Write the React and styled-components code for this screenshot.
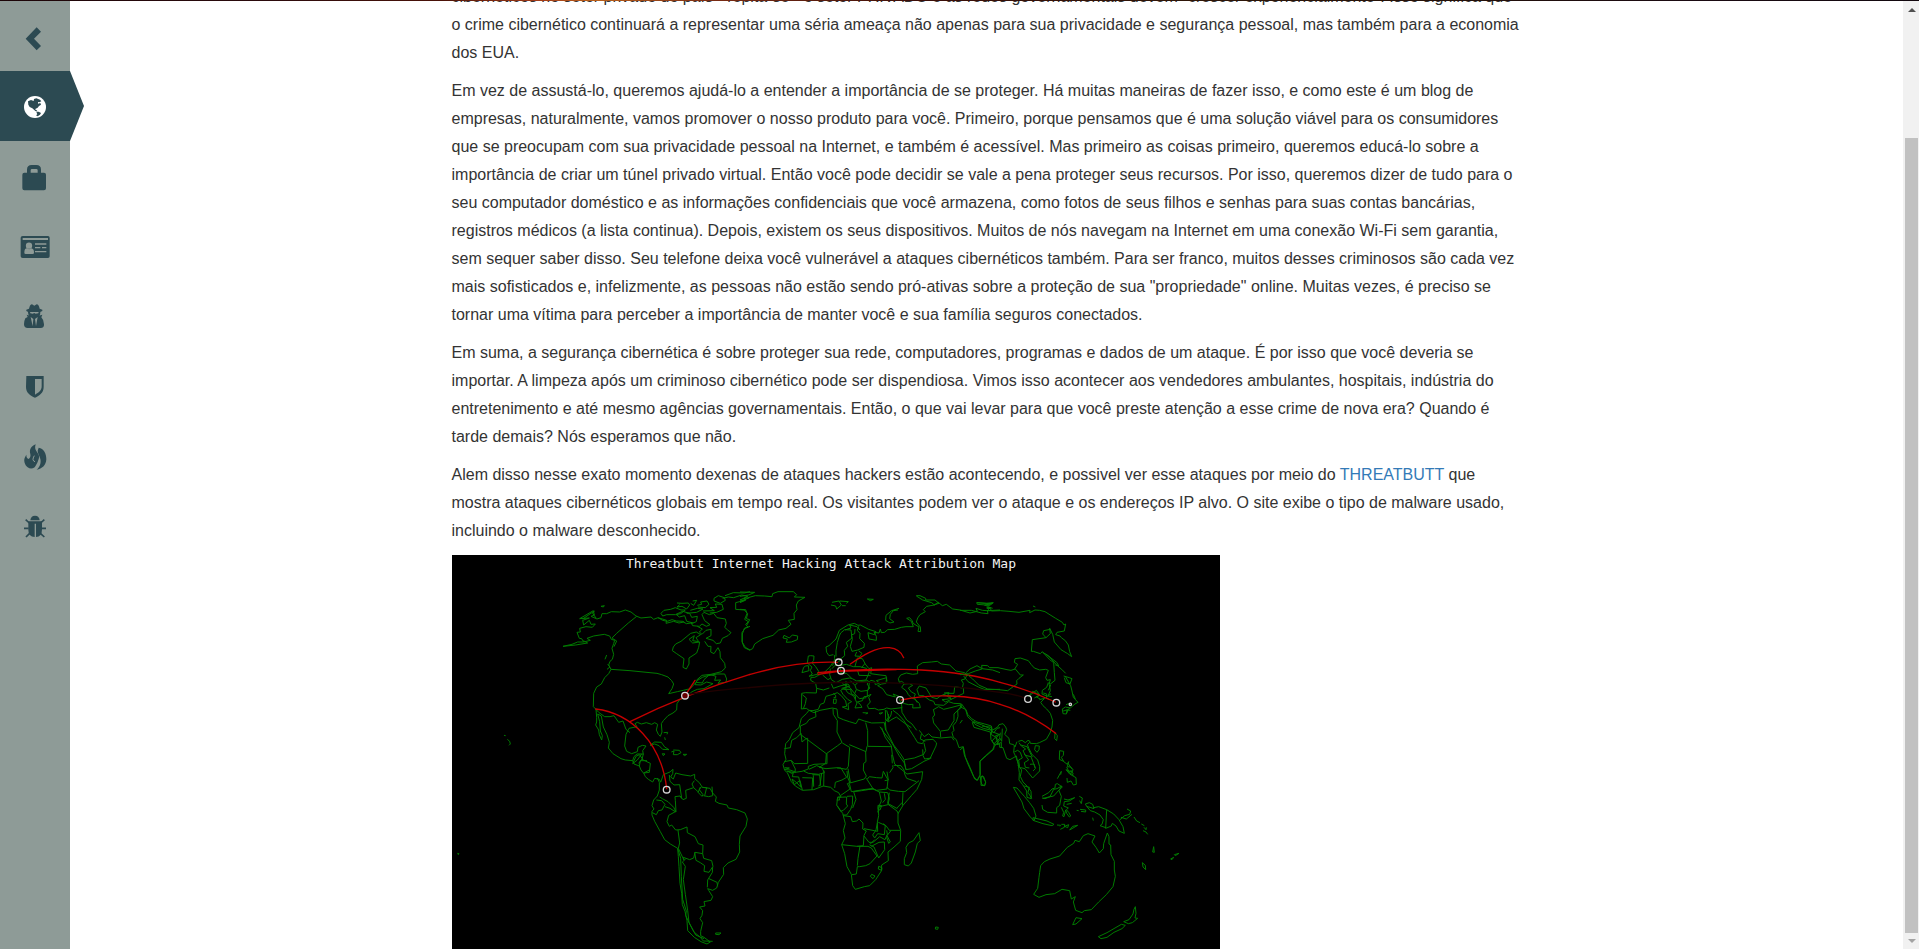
import React from "react";
import styled, { createGlobalStyle, css } from "styled-components";

const GlobalStyle = createGlobalStyle`
  html, body { margin: 0; padding: 0; background: #fff; overflow: hidden; }
  * { box-sizing: border-box; }
`;

const Screen = styled.div`
  position: relative;
  display: flex;
  width: 100%;
  height: 949px;
  padding-top: 1px;
  overflow: hidden;
  background: #fff;
  font-family: "Liberation Sans", Arial, sans-serif;
  font-size: 16px;
  line-height: 28px;
  color: #333;
`;

const TopEdge = styled.div`
  position: absolute;
  inset: 0 0 auto 0;
  height: 1px;
  background: linear-gradient(90deg, #1c0508 0%, #2b0a0c 14%, #4a1208 23%, #a03a18 28%, #b8601c 31%, #7a2c14 37%, #3a0d08 48%, #2e1608 62%, #241008 75%, #1a0a12 88%, #12080e 100%);
`;

const Sidebar = styled.nav`
  flex: none;
  width: 70px;
  background: #8e9b97;
`;

const NavItem = styled.a`
  position: relative;
  display: block;
  width: 70px;
  height: 70px;
  color: #2c4a52;
  ${(p) =>
    p.$active &&
    css`
      color: #fff;
      background: #2c4a52;
      &::after {
        content: "";
        position: absolute;
        left: 100%;
        top: 0;
        border: solid transparent;
        border-width: 35px 0 35px 14px;
        border-left-color: #2c4a52;
      }
    `}
`;

const NavIcon = styled.svg`
  display: block;
  width: 70px;
  height: 70px;
  fill: currentColor;
`;

const Main = styled.main`
  flex: 1;
  min-width: 0;
  overflow: hidden;
  padding-left: 381.5px;
`;

const Article = styled.article`
  width: 1070px;
  margin-top: -18px;
`;

const Paragraph = styled.p`
  margin: 0 0 10px;
`;

const Link = styled.a`
  color: #337ab7;
  text-decoration: none;
`;

const MapSvg = styled.svg`
  display: block;
  width: 768px;
  height: 420px;
  background: #000;
`;

const MapTitle = styled.text`
  font-family: "DejaVu Sans Mono", monospace;
  font-size: 13px;
  fill: #f2f2f2;
`;

const Coast = styled.g`
  fill: none;
  stroke: #007a00;
  stroke-width: 3;
  stroke-linejoin: round;
`;

const Attack = styled.g`
  fill: none;
  stroke: #c40000;
  stroke-width: 4;
  stroke-linecap: round;
`;

const Trail = styled.path`
  stroke: #220000;
`;

const Target = styled.g`
  fill: none;
  stroke: #d6d6d6;
  stroke-width: 4;
`;

const ScrollTrack = styled.div`
  flex: none;
  display: flex;
  flex-direction: column;
  align-items: center;
  width: 16px;
  height: 948px;
  padding: 7px 1px 6px 2px;
  background: #f1f1f1;
`;

const ScrollArrow = styled.i`
  width: 0;
  height: 0;
  border: solid transparent;
  border-width: ${(p) => (p.$down ? "4px 4px 0" : "0 4px 4px")};
  ${(p) => (p.$down ? "border-top-color: #a3a3a3;" : "border-bottom-color: #505050;")}
`;

const ScrollThumb = styled.div`
  width: 13px;
  height: 795px;
  margin: 126px 0 6px;
  background: #c1c1c1;
`;

const icons = {
  back: <path d="M77 113 110 79 123 92 102 113 123 135 110 148Z" />,
  globe: (
    <>
      <circle cx="105" cy="108" r="33" />
      <path
        fill="#2c4a52"
        d="M84 91 93 87 101 90 102 84 109 82 120 86 124 91 118 94 114 93 114 98 121 96 123 101 117 105 113 110 107 113 105 115 110 118 113 122 106 120 97 112 89 108 85 101ZM109 124 116 122 123 126 120 131 113 136 108 133 112 130Z"
      />
    </>
  ),
  lock: (
    <path
      fillRule="evenodd"
      d="M67 101Q67 95 73 95H81V86Q81 72 95 72H109Q123 72 123 86V95H132Q138 95 138 101V142Q138 148 132 148H73Q67 148 67 142ZM92 95H113V88Q113 84 109 84H96Q92 84 92 88Z"
    />
  ),
  card: (
    <>
      <path fillRule="evenodd" d="M68 75H144Q149 75 149 80V136Q149 141 144 141H68Q62 141 62 136V80Q62 75 68 75ZM68 81V87H144V81Z" />
      <g fill="#8e9b97">
        <circle cx="87" cy="104" r="9.5" />
        <path d="M73 125Q73 112 81 112Q87 117 94 112Q102 113 102 125Q102 129 98 129H77Q73 129 73 125Z" />
        <path d="M105 97H139V101H105ZM105 108H121V112H105ZM126 108H139V112H126ZM105 120H139V124H105Z" />
      </g>
    </>
  ),
  spy: (
    <>
      <path d="M87 83Q90 70 96 70L103 74 110 70Q116 70 119 83L127 86V90L119 94H86L79 90V86Z" />
      <path d="M84 93H121Q121 107 112 114L103 118 94 114Q85 107 84 93Z" />
      <path d="M80 101 83 108 76 112Q72 120 72 130 72 141 83 141H122Q133 141 132 130 132 117 124 109L127 101 114 105 107 113 103 116 98 113 92 105Z" />
      <g fill="#8e9b97">
        <path d="M90 93H116L115 97 107 98 103 96 98 98 91 97Z" />
        <path d="M92 108 100 114 98 136ZM113 108 105 114 108 136Z" />
      </g>
    </>
  ),
  shield: (
    <path fillRule="evenodd" d="M79 75H131V108C131 126 118 134 105 140C91 134 78 126 78 108ZM105 84V131C116 125 125 119 125 106V84Z" />
  ),
  fire: (
    <>
      <path d="M107 70Q103 82 109 90C114 98 121 105 115 117C112 126 108 133 104 139Q93 146 83 139C74 132 70 118 75 109Q77 104 79 101Q79 112 86 114Q93 109 91 99C87 87 93 75 107 70Z" />
      <path d="M116 80C131 82 140 99 139 115C138 133 126 144 110 146C119 139 124 126 121 114C119 103 113 98 113 89Z" />
      <path d="M103 104Q94 119 105 122" fill="none" stroke="#8e9b97" strokeWidth="3" />
    </>
  ),
  bug: (
    <>
      <path d="M91 88Q92 74 105 74 118 74 119 88Z" />
      <path d="M85 91H126V115Q126 138 108 138V98H104V138Q85 137 85 116Z" />
      <path d="M88 96 77 86M122 96 133 86M86 112H72M124 112H138M89 127 78 138M121 127 133 138" fill="none" stroke="currentColor" strokeWidth="5" />
    </>
  ),
};

const americas = [
  "M339 289 366 283 383 276 401 276 395 266 388 265 381 247 391 246 389 235 408 230 427 232 436 222 423 223 418 211 401 225 398 211 418 204 389 206 430 182 433 195 423 199 441 207 453 203 456 191 470 191 484 185 509 186 526 180 543 186 558 198 573 204 603 201 611 208 624 203 650 211 648 220 671 214 687 219 702 216 705 220",
  "M401 276 421 271 411 265 431 258 450 255 463 253 479 258 484 268 494 271 491 281 486 295 491 313 487 328 480 334 476 345 483 358 476 371 464 383 454 402 440 411 431 430 430 470 438 478 440 502 440 516 437 525 446 540 448 554 455 570 457 557 451 543 449 515 443 492 454 498 460 531 471 554 478 577 475 594 489 611 513 626 526 630 548 632 552 642 568 648 573 660 582 671 586 680 595 688 608 696 614 685 628 688 632 696",
  "M339 289 377 285 413 279 400 272M486 264 500 250 535 219 560 199M398 207 433 183 428 190 438 204M453 169 463 167 460 171Z",
  "M483 358 540 362 600 368 621 370 635 374 654 381 665 392 671 402 666 416 656 431 682 425 700 421 721 416 728 408 738 397 757 399 762 389 775 377 801 372 824 372 830 387 828 397 804 400 812 390 794 391 798 379 782 374 757 382 741 392 735 404 753 405 770 396 789 401 762 416 742 418 726 425 717 433 700 445 688 450 681 461 680 480 669 489 654 497 640 512 634 521 636 546 631 559 625 553 619 540 623 523 614 518 605 523 589 518 574 522 562 517 555 521 561 530 537 535 528 553 524 588 530 604 545 611 562 605 564 592 577 586 588 588 578 602 580 613",
  "M438 478 446 487 464 500 480 500 492 497 506 517 519 513 528 538 540 548M548 632 552 620 561 612 580 612 576 628 586 633 601 640 598 667 582 669M568 648 571 632 591 632M575 612 562 630 548 641 558 619 568 614 577 626 566 640M580 670 598 660",
  "M600 586 614 576 634 577 644 591 657 599 638 598 627 587 614 582 600 586M637 611 645 612 640 617ZM664 606 672 603 670 614 682 614 693 608 688 601 670 600M699 613 710 613 704 617ZM641 548 653 547 651 553M644 562 646 570M162 556 167 557M172 568 179 574 181 582 177 586M23 910 27 911 25 914Z",
  "M624 203 638 211 652 214 666 209 679 213 699 214 709 221 724 219 728 227 748 229 756 222 769 229 780 224 764 212 756 194 762 187 778 194 791 190 801 203 826 207 829 220 824 232 832 239 843 248 834 257 817 265 811 279 799 281 789 271 768 265 783 257 783 238 768 241 756 253 748 246 757 237 742 229M730 219 710 214 704 197 688 201 678 193 698 184 719 190 725 202 742 199 739 215 724 221M633 190 642 181 662 178 676 173 693 180 706 180 692 191 677 194 650 194 638 198Z",
  "M681 159 696 160 715 159 719 165 710 177 696 169 681 171 689 164M728 153 740 151 731 166 722 160M742 166 755 163 752 156 771 153 777 163 766 173 744 171M759 183 793 182 780 173 800 172 796 162 816 163 820 178 800 187 779 189M710 190 740 187 759 177 742 175 721 181M792 145 805 137 823 143 826 151 811 160 792 153ZM825 137 850 128 883 129 900 125M818 145 835 141 851 143 875 135 893 139 870 150 884 151 857 158 857 178 883 180 893 191 889 206 899 209 891 225",
  "M670 291 677 282 693 274 705 264 722 250 739 246 752 254 738 263 746 275 728 272 733 257 717 268 728 279 749 276 746 292 740 309 717 324 717 342 709 357 699 352 702 326 680 311 667 302ZM764 274 774 289 783 289 782 306 792 311 804 293 810 305 811 323 824 340 826 354 814 365 783 373 756 376 739 391M487 265 500 273 492 290M470 315 465 328M473 343 480 351 471 358M900 229 883 235 877 252 877 278 883 293 900 301",
  "M632 697 640 674 660 666 669 658 668 671 662 681 670 687 677 669 696 674 722 678 734 673 734 686 748 698 757 712 780 715 788 729 799 741 796 754 807 760 831 765 835 774 860 779 885 789 892 807 888 829 870 858 868 883 869 906 858 928 834 939 820 953 821 973 805 997 800 1014 788 1021 773 1016 776 1021 788 1040 783 1051 762 1055 765 1068 749 1071 758 1082 756 1096 750 1106 758 1118 752 1144 752 1157 762 1162 781 1176 771 1182 753 1175 733 1162 713 1142 711 1112 705 1084 697 1064 695 1030 690 1000 687 950 685 920 683 895 661 882 644 869 631 845 614 814 606 795 606 784 612 777 606 767 611 750 622 738 628 720 628 697 622 684",
  "M619 750 635 752 645 763 636 780 625 782 619 794 607 788M645 770 660 775 677 786 674 782M629 741 637 746 654 755 671 772 678 785 676 751 675 740 690 738 695 745 689 704 672 705 660 694 658 675M690 738 699 749 709 745 707 721 731 713 726 702 733 692M731 713 745 726 751 711M743 726 756 739 759 734 748 719 754 710M760 737 776 740 788 737 786 710M764 737 770 713 757 712M676 785 656 796 651 815 658 829 665 825 677 840 691 839 711 831 712 848 735 860 745 881 759 885 758 911 735 907 731 924 719 929 700 922 702 930 693 912 685 895 689 879 684 840M734 907 738 931 751 938 764 947 762 964 777 967 789 949 785 932 761 925 758 911M788 951 787 967 773 990 772 1012M777 986 801 997 803 1009M707 927 697 936 706 949 700 989 706 1033 713 1081 717 1117 732 1146 751 1162 760 1173 788 1174M683 895 692 925 694 980 698 1048 709 1083 707 1096 719 1122 737 1155 762 1166M797 1149 813 1149 807 1154 797 1153Z",
];

const africaEurope = [
  "M0 126 44 127 26 135 0 139M0 158 18 150 12 145 28 143 0 155M24 143 46 137 74 138 96 140 98 131 114 125 160 125 170 134 163 141 195 142 175 153 169 165 171 179 162 190 163 208 145 211 153 223 138 235 116 240 99 256 68 266 44 282 38 296 30 300 16 292 6 275 6 248 16 234 24 232 17 223 25 215 14 208 21 191 17 179 0 178M132 256 148 264 157 255 173 258 172 269 154 276 139 277 142 267 129 264Z",
  "M276 157 297 153 304 165 290 177 287 168 273 165M299 153 325 155 319 160M306 167 317 167M382 147 400 148 391 152ZM477 175 455 182 438 196 437 211 450 219 462 216 449 206 451 193 460 182 474 180M529 137 540 137 557 145 557 150 585 150 597 160 582 165 595 157 607 167 619 163 638 177 660 180 690 189 712 184 708 175 727 181 741 182 780 180M529 138 548 150 575 158 583 165 560 169 550 179 556 185 540 194 533 204 529 216 541 231 542 245 534 244 537 231 519 220 517 213 509 203 500 205 514 214 520 230 498 230 484 232 464 238 443 239 434 247 424 248 421 237 417 249 402 247M711 158 740 160 760 158 734 166 751 164M745 178 743 170 758 175",
  "M280 314 267 317 260 307 258 291 267 287 288 267 298 241 324 225 343 220 354 226 361 225 386 238 408 245 403 254 384 248 387 267 409 271 409 259 402 246M315 240 333 234 329 225 351 230 360 240M288 320 288 302 292 277 298 258 302 249 314 239 333 240 336 264 319 277 323 289 313 301 314 317 302 327 295 337M356 229 352 241 360 250 359 266 373 280 372 292 353 300 336 304 331 289 337 268 334 255 344 251 345 237M283 315 284 326 281 340 277 347M356 303 366 310 360 319 345 318 350 306",
  "M212 317 222 318 221 331 216 338 227 350 236 364 231 373 207 379 217 372 211 361 216 351 202 339 205 318ZM197 348 205 347 207 362 186 368 191 352Z",
  "M281 334 270 351 253 367 235 376 224 382 213 382 212 391 227 400 230 416 229 429 197 428 185 430 185 444 184 477 199 475 207 481 219 482 235 478 241 463 252 459 258 439 279 433 292 428 304 437 317 453 320 469 307 471 326 479 324 461 335 455 323 448 309 433 302 421 314 414 323 428 341 438 351 459 345 474 366 472 360 462 352 456 367 452 372 440 382 439 382 421 390 414 381 402 393 391 404 394 406 404 419 399 409 392 440 383 438 400 425 402 413 407 428 416 440 434 466 441 459 432 482 441 478 449 485 461",
  "M271 356 269 374 274 389 288 398 307 388 329 384 337 386 350 393 378 390 388 366 379 355 360 350 340 350 319 343 303 346 285 346 276 356M301 352 303 369 320 370 335 385M321 362 350 361M353 362 357 376 392 377M345 349 352 324 367 326 375 340 365 353M374 340 387 356 395 353 392 371 420 375 438 377 441 394M331 392 345 406 355 396 384 392 388 401 384 421 363 424 349 418 345 406M349 419 344 431 358 446 379 443M274 401 280 415 300 408 324 402 329 409 305 415M310 418 332 418 334 431 347 438 346 448M307 401 330 413 348 436M248 375 264 389 272 384M230 415 250 420 268 414M318 393 318 416M187 434 199 444 196 461 190 476M386 442 393 433 381 439M386 442 391 456 382 466 386 476 404 475 415 480 432 478 440 474 453 477 486 473 484 461M280 430 287 436 287 443 281 442M281 447 289 448 288 460 280 460ZM368 488 384 489 377 492M417 490 428 488 422 492Z",
  "M484 449 490 460 506 464 519 463 518 474 541 473 538 460 525 448 514 443 505 434 499 423 485 412 492 402 508 401 518 406 505 414 514 426 526 432 522 442 532 458M475 386 482 375 499 369 518 373 533 371 532 348 548 338 574 336 592 334 604 342 629 345 648 363 674 368 681 375 675 387 664 390 670 400 667 414 644 410 642 430 620 430 601 438 591 446 575 442 558 414 538 408 531 419 537 437 551 437 568 450 581 454 585 464 611 466 626 455 641 460 662 461 665 472 653 480 654 499 649 515 639 527 642 541 636 548 640 562 649 569 657 593 670 590 676 621 690 652 701 679 711 692 721 674 720 634 739 617 761 598 763 580 780 565M475 386 478 397 485 394 494 401M440 481 446 502 436 515 438 540 461 585 481 611 492 628 498 659 515 656 552 634 570 626 588 588 590 579 579 568 554 570 547 581 533 578 524 563 510 541 491 511 475 493 459 481M538 541 547 553 553 560 566 551 576 561 602 564 635 561 642 571M485 472 486 487 500 510 516 522 530 541",
  "M580 478 584 495 578 502 581 519 601 544 602 562M603 543 625 540 633 526 642 512 642 492 659 476 664 463M580 479 596 470 611 478 636 472 662 465M677 369 690 357 711 347 726 356 758 360 780 368M671 378 684 395 715 411 735 419 780 418M610 435 635 439 625 447 606 449 617 456 642 444 671 430 670 413M612 429 627 428 622 439 635 448M664 461 677 479 683 500 700 516 724 524 750 536 761 549 771 535 780 533M704 514 697 518 702 532 751 546 753 569 764 584 773 580 767 557 780 553M727 677 737 696 734 707 723 706 724 680Z",
  "M207 481 222 488 240 481 277 474 291 477 294 502 310 509 328 515 348 521 356 507 373 513 395 519 433 518 437 541M207 481 199 491 184 505 177 533 158 548 148 569 137 581 134 611 138 628 129 644 134 661 142 668 154 695 166 708 187 721 221 719 250 708 272 712 283 722 296 728 303 741 293 741 290 766 308 790 316 821 310 842 315 864 305 884 314 911 321 950 334 973 338 1007 346 1018 373 1010 389 1007 407 989 424 963 425 945 445 932 444 906 459 894 481 874 482 841 474 819 474 791 489 766 514 737 531 718 545 688 548 665 528 668 501 672 490 663 464 642 457 613 454 588 435 561 425 533M420 530 432 548 454 576 477 616 493 639 498 659",
  "M226 483 228 500 207 509 199 520 181 528 181 553 259 611 293 587 306 577 291 546 292 512 280 493 279 475M133 596 151 593 155 571 170 563 183 550 186 576 198 566 203 565 203 640 163 641 154 631 133 635M154 633 160 645 166 657 165 667 186 664 205 657 205 649 222 643 261 641 261 610M259 611 257 640 238 652 258 656 292 653 319 658 325 649 329 592 307 579M377 518 383 542 383 589 455 590M381 589 378 605 328 584M377 606 378 635 371 640 370 660 379 678 373 687 330 699 323 682 321 663M382 687 388 680 410 683 426 684 430 664 439 681 444 689 441 717 410 721 399 716 379 685M440 711 449 720 475 724 495 725 537 692M441 665 445 690 434 692M449 668 459 653 458 646M461 646 483 647 492 660 494 672 500 685 529 695M489 727 487 767M455 614 457 640",
  "M134 653 148 654 133 659 150 660 166 666 155 670 144 664M141 664 160 667 157 680 176 681 183 712 170 698 156 687 163 704 180 691 187 720M187 683 218 684 216 719M191 663 205 670 236 673 253 668 246 653 230 647 207 658M217 674 239 675 242 706 235 708M220 676 221 710M245 670 240 705M252 662 251 709M291 654 303 654 320 682 306 690 286 697 284 714M324 656 331 697 322 701 330 717 301 737M328 700 334 725 376 718 399 717M295 742 320 741 319 762 323 768 310 781 302 784 292 767M297 742 299 750 290 750M321 739 338 738 337 764 332 778 320 795 309 795M341 725 365 722 401 716M341 725 348 748 338 774M310 797 332 800 337 815 350 813 357 807 369 819 368 837 379 843 372 856 370 887 351 889 305 884",
  "M377 719 397 716 418 726 424 753 415 773 416 797 412 816 413 844 403 842 372 836M418 726 443 728 448 745 444 764 418 770 413 787M444 763 471 783 475 791M415 817 438 827 448 841 481 841M412 819 408 840 398 855 404 864 413 851 433 854 436 826 429 821M372 858 387 877 399 877 419 860 435 869 442 853 440 841M389 885 402 891 416 924 434 899 433 876 417 877 394 889M351 889 384 889 394 894 411 918 390 941 377 947 359 950 352 950 349 972 336 974M360 888 354 925 352 947M404 869 390 883M452 843 441 857 451 876 446 880 440 862M395 973 405 978 399 986 391 979ZM416 949 426 953 425 961 415 957ZM414 766 425 767 420 780 414 779ZM537 848 541 872 532 880 526 906 514 939 505 948 493 944 493 926 500 908 498 892 506 879 520 872ZM587 1131 595 1132 593 1138 586 1137Z",
  "M436 480 437 510 443 513 453 495 455 483M445 492 444 516 456 508 469 501 493 519 514 533M544 552 541 567 556 574M552 579 557 602 549 616 554 627 574 624M494 629 523 624 549 614 548 598M428 758 436 748 433 730M448 728 443 760 472 776M471 774 487 757",
];

const asiaOceania = [
  "M50 158 78 160 98 160 89 166 52 163ZM79 171 91 173 84 179M0 181 34 181 64 189 84 191 82 182 93 182 92 175 80 175M94 183 121 182 147 184 177 187 210 181 209 188 225 180 239 181 255 185 287 205 307 217 312 225 317 222 313 243 291 247 287 254 300 258 304 263 316 272 325 285 329 305 335 320 323 311 303 299 283 276 278 253 269 235 271 251 258 263 248 252 251 242 271 238M219 168 226 171M258 263 217 269 214 304 220 304 241 311 247 305 269 329 281 338 283 368 285 391 270 403 265 398 260 412 247 421 246 432 262 439 273 431M248 307 266 318 289 344 305 358 317 370M257 312 290 337 296 347 286 345M311 378 328 383 336 386 330 402 318 398 313 383",
  "M317 381 332 407 336 423 340 442 354 457 345 462 331 474 316 471 306 478 311 483 322 479 319 492M307 478 309 491 319 492 324 480 331 481M340 433 346 447M318 464 329 460M329 475 319 483M268 404 271 422 264 438 276 440M272 405 265 421M250 429 260 432 260 445 277 452",
  "M0 374 25 371 46 363 66 357 65 346 83 347 89 353 114 353 141 359 153 361 166 357 181 375 190 375 177 385 170 392 171 402 143 422 116 419 83 417 56 405 38 387 20 372M164 357 173 343 163 337 165 326 181 324 205 332 214 344 223 354 239 360 257 358 265 361 257 383 261 391 271 389 267 404M223 444 240 435 218 424 206 439 229 421 240 436 228 440 240 447M238 449 254 445 242 457 249 467 260 477 271 490 278 511 276 531 270 549 259 568 238 578 229 581 211 580 209 573 204 571 196 578 186 571 175 574M0 470 18 479 23 493 35 506 51 516 74 522 94 528 97 541 113 531 117 524 129 521 137 531 140 539 134 553 147 565 149 581 161 584 165 591 171 575",
  "M0 600 9 592 13 615 25 645 44 687 53 690 60 676 60 633 77 617 98 598 104 587 110 583 119 582 119 592 129 593 140 625 150 629 159 624 169 618 175 645 178 668 177 690 188 704 200 723 201 742 214 746 213 724 203 710 189 696 181 679 185 660 174 646 182 653 195 656 205 668 218 684 239 663 239 650 233 630 215 612 207 596 202 584 209 577M0 520 7 510M39 516 45 523 70 535 95 541 94 532 66 528M95 537 94 554 107 561 96 573 104 585M96 545 117 553 108 565 118 570 111 584 124 577 124 592M121 548 119 563 125 574 127 536M163 587 161 607 165 615 178 648 176 630 187 624 181 607 173 601 163 606M177 578 184 588 197 597 189 602 196 616 213 620 221 641 226 656 219 663M182 585 201 590 217 621M193 612 206 630 193 638 196 652 208 654M210 643 222 642 226 654M226 587 238 588 237 599 231 607 224 599ZM285 549 292 557 290 572 284 566ZM62 679 71 680 77 697 74 707 66 704 61 691Z",
  "M160 712 171 714 193 739 208 757 221 775 228 798 222 812 211 801 192 776 186 756ZM219 803 240 808 261 813 282 823 276 827 249 821 219 811ZM193 708 208 712 204 727 215 745M246 744 255 746 270 740 281 718 291 716 305 708 297 722 304 739 299 766 290 773 290 789 263 787 248 778 246 765M246 739 266 728 276 717 285 714 286 703 292 701 307 711 298 719 281 738 249 745M299 602 311 604 310 616 304 622 311 634 298 628ZM310 634 322 643 326 635 322 650 332 651 339 659 336 667 318 659 329 672 348 683 349 703 340 705 333 693 322 697 321 684M320 651 328 668 341 676M292 686 304 664 302 674M324 640 337 658M332 660 340 672M312 747 324 750 344 743 328 753 313 755 311 768 325 774 319 779 326 787 332 798 328 801 320 790 317 780 312 800 308 798 311 787 304 772M320 763 335 760M358 739 367 744 364 761 359 752M350 781 356 782M360 778 377 780 377 786 363 784",
  "M291 825 302 826 300 829M304 823 314 823 313 832 301 838M314 829 326 824 323 833ZM329 840 338 829 353 826ZM376 762 388 758 398 763 402 776 380 769ZM380 769 391 782 404 786 420 795 430 809 426 823 420 827 440 834 454 828 457 820 468 828 477 843 493 850 489 830 477 809 461 792 440 779 416 770 401 773M440 779 437 836M398 803 400 812M480 809 494 797 509 793 512 783 501 777M483 802 499 807 516 793M522 801 530 813 540 818M544 822 553 827M552 832 558 839 559 832M549 842 558 846 563 853M581 890 578 906 583 907ZM547 938 556 946 557 959 549 951ZM632 927 641 922 636 929ZM643 914 657 910 646 917Z",
  "M253 935 270 927 299 918 322 892 341 880 345 871 358 875 370 857 384 851 405 858 396 876 408 892 418 909 430 896 431 881 442 849 447 860 447 882 452 885 453 914 463 934 463 960 466 979 459 1010 439 1034 416 1056 394 1079 373 1082 366 1088 347 1081 340 1056 346 1040 334 1047 329 1022 306 1018 284 1031 258 1034 237 1042 221 1033 233 1015 237 982 239 967 242 947 253 935M348 1103 366 1106 348 1122 338 1124ZM526 1070 528 1090 525 1104 533 1105 517 1118 505 1121 491 1115 507 1109 519 1092 522 1078ZM484 1123 496 1126 486 1136 462 1147 441 1162 423 1166 415 1160 441 1148Z",
];

function Outlines({ paths }) {
  return (
    <Coast>
      {paths.map((d) => (
        <path key={d.slice(0, 32)} d={d} />
      ))}
    </Coast>
  );
}

function AttackMap() {
  return (
    <MapSvg viewBox="0 0 768 420">
      <MapTitle x="174" y="13" textLength="390">
        Threatbutt Internet Hacking Attack Attribution Map
      </MapTitle>
      <g transform="translate(-2 -5) scale(.33333)">
        <Outlines paths={americas} />
        <Attack>
          <path d="M437 477C545 490 635 580 650 716M540 515C640 465 760 415 900 373M735 391 705 437" />
          <Trail d="M720 432Q800 420 900 413" />
        </Attack>
        <Target>
          <circle cx="705" cy="437" r="10" fill="#600" />
          <circle cx="650" cy="719" r="10" />
        </Target>
      </g>
      <g transform="translate(288 -5) scale(.33333)">
        <Outlines paths={africaEurope} />
        <Attack>
          <Trail d="M25 413Q210 395 400 397 600 400 780 427" />
          <path d="M28 374C120 347 205 334 292 337M331 342C370 315 410 290 448 293 475 296 485 308 491 323M234 373 303 363M234 368 303 362C450 352 640 355 780 397M303 364 468 359M484 450C570 432 690 432 780 463" />
        </Attack>
        <Target>
          <circle cx="296" cy="337" r="10" />
          <circle cx="303" cy="362" r="10" />
          <circle cx="480" cy="450" r="10" />
        </Target>
      </g>
      <g transform="translate(508 -5) scale(.33333)">
        <Outlines paths={asiaOceania} />
        <Attack>
          <Trail d="M120 427Q170 433 196 445" />
          <path d="M120 397Q210 420 286 456M120 463Q205 488 287 550" />
        </Attack>
        <Target>
          <circle cx="204" cy="447" r="10" />
          <circle cx="289" cy="458" r="10" />
          <circle cx="331" cy="463" r="3.5" />
        </Target>
      </g>
    </MapSvg>
  );
}

export default function App() {
  return (
    <Screen>
      <GlobalStyle />
      <Sidebar>
        {Object.entries(icons).map(([name, shape]) => (
          <NavItem key={name} $active={name === "globe"}>
            <NavIcon viewBox="0 0 210 210">{shape}</NavIcon>
          </NavItem>
        ))}
      </Sidebar>
      <Main>
        <Article>
          <Paragraph>
            cibernéticos no setor privado do país - repita-se - o setor PRIVADO e as redes governamentais devem "crescer exponencialmente". Isso significa que<br />
            o crime cibernético continuará a representar uma séria ameaça não apenas para sua privacidade e segurança pessoal, mas também para a economia dos EUA.
          </Paragraph>
          <Paragraph>
            Em vez de assustá-lo, queremos ajudá-lo a entender a importância de se proteger. Há muitas maneiras de fazer isso, e como este é um blog de empresas, naturalmente, vamos promover o nosso produto para você. Primeiro, porque pensamos que é uma solução viável para os consumidores que se preocupam com sua privacidade pessoal na Internet, e também é acessível. Mas primeiro as coisas primeiro, queremos educá-lo sobre a importância de criar um túnel privado virtual. Então você pode decidir se vale a pena proteger seus recursos. Por isso, queremos dizer de tudo para o seu computador doméstico e as informações confidenciais que você armazena, como fotos de seus filhos e senhas para suas contas bancárias, registros médicos (a lista continua). Depois, existem os seus dispositivos. Muitos de nós navegam na Internet em uma conexão Wi-Fi sem garantia, sem sequer saber disso. Seu telefone deixa você vulnerável a ataques cibernéticos também. Para ser franco, muitos desses criminosos são cada vez mais sofisticados e, infelizmente, as pessoas não estão sendo pró-ativas sobre a proteção de sua "propriedade" online. Muitas vezes, é preciso se tornar uma vítima para perceber a importância de manter você e sua família seguros conectados.
          </Paragraph>
          <Paragraph>
            Em suma, a segurança cibernética é sobre proteger sua rede, computadores, programas e dados de um ataque. É por isso que você deveria se importar. A limpeza após um criminoso cibernético pode ser dispendiosa. Vimos isso acontecer aos vendedores ambulantes, hospitais, indústria do entretenimento e até mesmo agências governamentais. Então, o que vai levar para que você preste atenção a esse crime de nova era? Quando é tarde demais? Nós esperamos que não.
          </Paragraph>
          <Paragraph>
            Alem disso nesse exato momento dexenas de ataques hackers estão acontecendo, e possivel ver esse ataques por meio do <Link>THREATBUTT</Link> que mostra ataques cibernéticos globais em tempo real. Os visitantes podem ver o ataque e os endereços IP alvo. O site exibe o tipo de malware usado, incluindo o malware desconhecido.
          </Paragraph>
          <AttackMap />
        </Article>
      </Main>
      <ScrollTrack>
        <ScrollArrow />
        <ScrollThumb />
        <ScrollArrow $down />
      </ScrollTrack>
      <TopEdge />
    </Screen>
  );
}
